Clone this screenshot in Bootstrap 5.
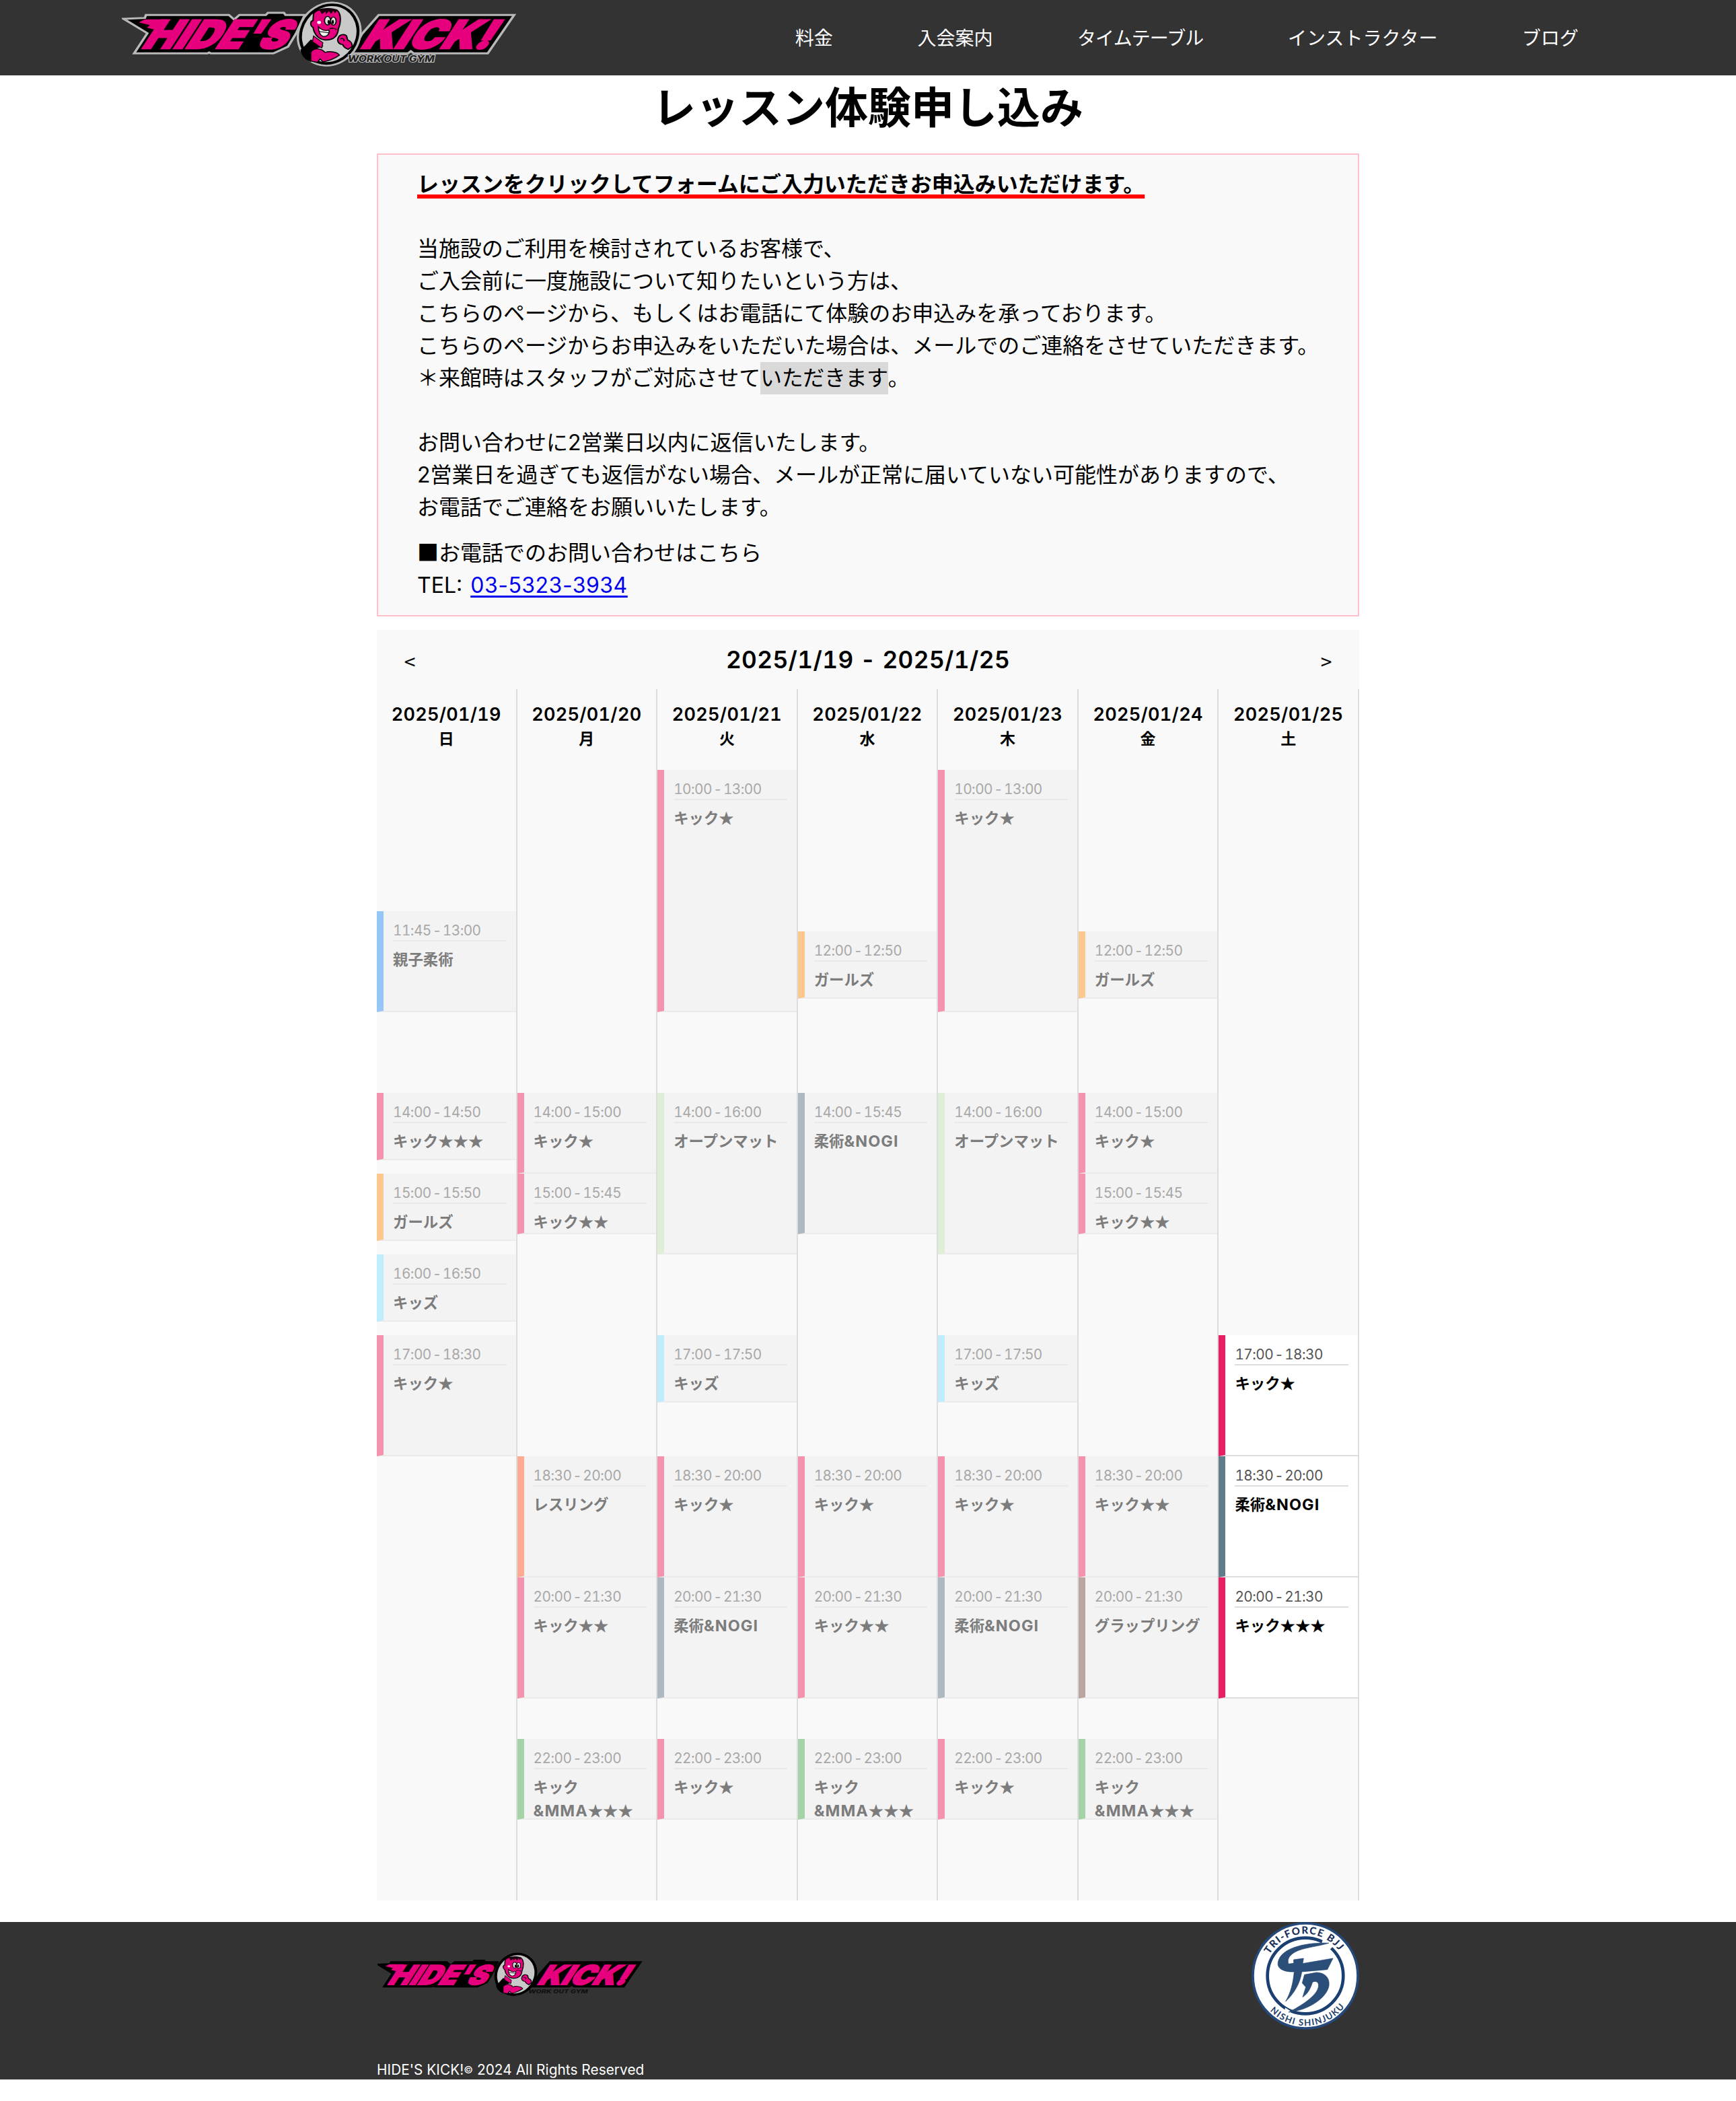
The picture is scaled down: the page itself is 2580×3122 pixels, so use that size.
<!DOCTYPE html>
<html lang="ja">
<head>
<meta charset="utf-8">
<meta name="viewport" content="width=device-width, initial-scale=1">
<title>レッスン体験申し込み | HIDE'S KICK!</title>
<link href="https://cdn.jsdelivr.net/npm/bootstrap@5.3.0/dist/css/bootstrap.min.css" rel="stylesheet">
<style>
  body { font-family: "Inter", "Noto Sans CJK JP", sans-serif; color: #000; background: #fff; font-size: 32px; line-height: 48px; }
  .site-header { height: 112px; background: #333; padding-left: 181px; padding-right: 234px; }
  .site-header svg { display: block; width: 588px; height: 100px; }
  .site-nav { gap: 125.6px; }
  .site-nav .nav-link { font-size: 28px; line-height: 42px; color: #fff; white-space: nowrap; padding-top: 1px !important; }
  .site-nav .tight { letter-spacing: -.9px; }
  .page-title { font-size: 64px; line-height: 96px; height: 116px; font-weight: 700; }
  .page-col { width: 1460px; }
  .info-box { border: 2px solid #ffc0cb; background: #f9f9f9; padding: 20px 0 20px 58px; height: 688px; white-space: nowrap; }
  .info-box p { margin: 0 0 20px; }
  .info-box .lead-line { font-weight: 700; letter-spacing: -.03px; text-decoration: underline; text-decoration-color: #f00; text-decoration-thickness: 6px; text-underline-offset: 4px; text-decoration-skip-ink: none; }
  .info-box .snug { letter-spacing: -.12px; }
  .info-box .tel-row { height: 48px; }
  .square-mark { font-family: "Noto Sans CJK JP", sans-serif; line-height: 1; }
  .picked { background: #d9d9d9; display: inline-block; height: 48px; vertical-align: top; letter-spacing: -.4px; }
  .tel-link { color: #00e; text-decoration-thickness: 3px; text-underline-offset: 4px; letter-spacing: .5px; margin-left: 3px; }
  .calendar { background: #f9f9f9; margin-top: 20px; }
  .cal-head { height: 88px; padding: 0 34px; }
  .cal-head h2 { font-size: 35.2px; font-weight: 600; margin: 0; letter-spacing: .4px; font-variant-numeric: tabular-nums; }
  .cal-head button { background: none; border: 0; padding: 3px 0 0; width: 30px; font-size: 30px; font-family: "Noto Sans CJK JP", sans-serif; color: #000; line-height: 40px; }
  .day { width: 208.571px; border-right: 2px solid #ddd; }
  .day-head { height: 120px; padding-top: 20px; font-weight: 600; font-size: 27px; letter-spacing: .3px; font-variant-numeric: tabular-nums; line-height: 36px; text-align: center; }
  .day-head small { display: block; font-size: 23px; font-weight: 700; letter-spacing: 0; }
  /* one row is five minutes, 10:00 to 24:00 */
  .slots { display: grid; grid-template-columns: 100%; grid-template-rows: repeat(168, 10px); }
  .lesson { --bar: #f592ae; border-left: 10px solid var(--bar); border-bottom: 2px solid #ebebeb; background: #f3f3f3; padding: 12px 14px 0; color: #7c7c7c; min-height: 0; }
  .lesson time { display: block; font-size: 20.8px; line-height: 33px; height: 33px; color: #a8a8a8; border-bottom: 2px solid #e9e9e9; font-variant-numeric: tabular-nums; letter-spacing: -.55px; word-spacing: -3px; white-space: nowrap; }
  .lesson b { display: block; font-family: "Noto Sans CJK JP", sans-serif; font-size: 22.4px; line-height: 34.5px; margin-top: 8px; white-space: nowrap; }
  .lesson b span { font-family: "Inter", sans-serif; font-size: 23.4px; letter-spacing: 1.1px; line-height: 1; }
  .lesson.open { --bar: #e91e63; background: #fff; color: #000; border-bottom-color: #ddd; }
  .lesson.open time { color: #555; border-bottom-color: #ddd; }
  .blue { --bar: #96c6f6; } .orange { --bar: #fdc88e; } .sky { --bar: #bfedfe; } .mat { --bar: #dfeed7; }
  .slate { --bar: #acb9c1; } .salmon { --bar: #ffab92; } .green { --bar: #a5d3a7; } .brown { --bar: #baa69e; }
  .lesson.open.slate { --bar: #607d8b; }
  .site-footer { margin-top: 32px; height: 234px; background: #333; }
  .foot-logo { width: 397px; height: 68.5px; margin: 43px 0 0 1px; }
  .foot-copy { color: #fff; font-size: 20.8px; line-height: 28px; letter-spacing: .05px; }
  .foot-copy span { font-size: 15px; vertical-align: 2px; line-height: 1; }
</style>
</head>
<body>
<header class="site-header d-flex justify-content-between">
  <a href="#" aria-label="HIDE'S KICK!"><svg viewBox="50 0 1440 300" preserveAspectRatio="none">
    <defs>
      <g id="plates" stroke-linejoin="miter">
        <path d="M57 84L134 80L138 67H440L459 87L478 67H574L582 57H640L646 67H716L684 150L655 208L602 238H512L505 238H374L368 234L362 238H95L143 148Z"/>
        <path d="M985 67H1478L1382 238H1112L1102 228L1092 238H885L925 150Z"/>
        <ellipse cx="805" cy="152" rx="112" ry="141" transform="rotate(12 805 152)"/>
      </g>
      <g id="mascot">
        <ellipse cx="805" cy="152" rx="98" ry="126" transform="rotate(12 805 152)" fill="#c9c9c9"/>
        <path d="M700 222C716 206 728 188 738 176C756 184 770 192 784 206C770 212 756 216 744 226L738 276C716 266 702 246 700 222Z" fill="#000"/>
        <path d="M748 160L782 190L778 214L744 186Z" fill="#e6007e" stroke="#000" stroke-width="3"/>
        <path d="M748 60C758 40 800 32 832 44C850 62 848 100 838 130C836 160 820 180 790 178C764 176 750 150 746 122C734 112 736 94 746 92Z" fill="#e6007e" stroke="#000" stroke-width="5"/>
        <path d="M770 46C786 36 812 34 834 46L826 60L820 48L812 62L804 50L792 64L792 52L778 62Z" fill="#200010"/>
        <ellipse cx="799" cy="92" rx="11" ry="19" fill="#ddd" stroke="#000" stroke-width="4"/>
        <ellipse cx="820" cy="94" rx="10" ry="18" fill="#ddd" stroke="#000" stroke-width="4"/>
        <ellipse cx="803" cy="98" rx="4" ry="9"/><ellipse cx="818" cy="98" rx="4" ry="9"/>
        <circle cx="768" cy="100" r="7" fill="#fff"/>
        <path d="M766 120C774 132 790 140 804 134C808 150 796 166 782 162C770 156 766 138 766 120Z" fill="#f4f4f4" stroke="#000" stroke-width="4"/>
        <path d="M768 140L804 146" stroke="#000" stroke-width="3"/>
        <path d="M806 128C814 124 826 126 832 132" stroke="#000" stroke-width="4" fill="none"/>
        <path d="M738 232C750 212 776 214 790 234C806 226 836 232 842 246C824 262 800 272 782 276L772 262L762 278L738 272Z" fill="#e6007e" stroke="#000" stroke-width="4"/>
        <path d="M838 168C842 154 860 150 868 160L872 178C884 184 890 196 888 208L874 220C862 214 856 206 854 198C840 198 832 184 838 168Z" fill="#e6007e" stroke="#000" stroke-width="5"/>
        <path d="M846 174C852 168 862 174 858 184" fill="none" stroke="#000" stroke-width="4"/>
      </g>
      <g id="wordmark" fill="#e6007e" stroke="#e6007e" stroke-width="8" font-family="Inter, 'Liberation Sans', sans-serif" font-weight="900" font-size="174">
        <path d="M112 100L134 86H210L170 132L142 124L152 112Z" stroke="none"/>
        <text transform="translate(118 217) skewX(-28)" textLength="520" lengthAdjust="spacingAndGlyphs">HIDE'S</text>
        <text transform="translate(914 217) skewX(-28)" textLength="472" lengthAdjust="spacingAndGlyphs">KICK!</text>
      </g>
    </defs>
    <use href="#plates" fill="#000" stroke="#b9b9b9" stroke-width="9"/>
    <use href="#wordmark"/>
    <ellipse cx="805" cy="152" rx="112" ry="141" transform="rotate(12 805 152)" fill="#000" stroke="#b9b9b9" stroke-width="7"/>
    <use href="#mascot"/>
    <text x="872" y="275" font-family="Inter, sans-serif" font-weight="800" font-style="italic" font-size="38" textLength="316" lengthAdjust="spacingAndGlyphs" fill="#222" stroke="#c4c4c4" stroke-width="6" paint-order="stroke">WORK OUT GYM</text>
  </svg></a>
  <nav class="nav site-nav align-items-center flex-nowrap">
    <a class="nav-link p-0" href="#">料金</a>
    <a class="nav-link p-0" href="#">入会案内</a>
    <a class="nav-link p-0 tight" href="#">タイムテーブル</a>
    <a class="nav-link p-0" href="#">インストラクター</a>
    <a class="nav-link p-0" href="#">ブログ</a>
  </nav>
</header>

<main>
  <h1 class="page-title text-center m-0">レッスン体験申し込み</h1>
  <div class="page-col mx-auto">
    <section class="info-box">
      <p><span class="lead-line">レッスンをクリックしてフォームにご入力いただきお申込みいただけます。</span><br><br>
      <span class="snug">当施設のご利用を検討されているお客様で、</span><br>
      <span>ご入会前に一度施設について知りたいという方は、</span><br>
      こちらのページから、もしくはお電話にて体験のお申込みを承っております。<br>
      こちらのページからお申込みをいただいた場合は、メールでのご連絡をさせていただきます。<br>
      <span class="snug">＊来館時はスタッフがご対応させて</span><span class="picked">いただきます</span>。<br><br>
      お問い合わせに2営業日以内に返信いたします。<br>
      2営業日を過ぎても返信がない場合、メールが正常に届いていない可能性がありますので、<br>
      お電話でご連絡をお願いいたします。</p>
      <div class="tel-row"><span class="square-mark">■</span>お電話でのお問い合わせはこちら</div>
      <div class="tel-row">TEL: <a class="tel-link" href="tel:0353233934">03-5323-3934</a></div>
    </section>

    <section class="calendar">
      <div class="cal-head d-flex justify-content-between align-items-center">
        <button type="button">&lt;</button>
        <h2>2025/1/19 - 2025/1/25</h2>
        <button type="button">&gt;</button>
      </div>
      <div class="d-flex">
        <div class="day"><div class="day-head">2025/01/19<small>日</small></div>
          <div class="slots">
            <div class="lesson blue" style="grid-row:22/span 15"><time>11:45 - 13:00</time><b>親子柔術</b></div>
            <div class="lesson" style="grid-row:49/span 10"><time>14:00 - 14:50</time><b>キック★★★</b></div>
            <div class="lesson orange" style="grid-row:61/span 10"><time>15:00 - 15:50</time><b>ガールズ</b></div>
            <div class="lesson sky" style="grid-row:73/span 10"><time>16:00 - 16:50</time><b>キッズ</b></div>
            <div class="lesson" style="grid-row:85/span 18"><time>17:00 - 18:30</time><b>キック★</b></div>
          </div></div>
        <div class="day"><div class="day-head">2025/01/20<small>月</small></div>
          <div class="slots">
            <div class="lesson" style="grid-row:49/span 12"><time>14:00 - 15:00</time><b>キック★</b></div>
            <div class="lesson" style="grid-row:61/span 9"><time>15:00 - 15:45</time><b>キック★★</b></div>
            <div class="lesson salmon" style="grid-row:103/span 18"><time>18:30 - 20:00</time><b>レスリング</b></div>
            <div class="lesson" style="grid-row:121/span 18"><time>20:00 - 21:30</time><b>キック★★</b></div>
            <div class="lesson green" style="grid-row:145/span 12"><time>22:00 - 23:00</time><b>キック<br><span>&amp;MMA</span>★★★</b></div>
          </div></div>
        <div class="day"><div class="day-head">2025/01/21<small>火</small></div>
          <div class="slots">
            <div class="lesson" style="grid-row:1/span 36"><time>10:00 - 13:00</time><b>キック★</b></div>
            <div class="lesson mat" style="grid-row:49/span 24"><time>14:00 - 16:00</time><b>オープンマット</b></div>
            <div class="lesson sky" style="grid-row:85/span 10"><time>17:00 - 17:50</time><b>キッズ</b></div>
            <div class="lesson" style="grid-row:103/span 18"><time>18:30 - 20:00</time><b>キック★</b></div>
            <div class="lesson slate" style="grid-row:121/span 18"><time>20:00 - 21:30</time><b>柔術<span>&amp;NOGI</span></b></div>
            <div class="lesson" style="grid-row:145/span 12"><time>22:00 - 23:00</time><b>キック★</b></div>
          </div></div>
        <div class="day"><div class="day-head">2025/01/22<small>水</small></div>
          <div class="slots">
            <div class="lesson orange" style="grid-row:25/span 10"><time>12:00 - 12:50</time><b>ガールズ</b></div>
            <div class="lesson slate" style="grid-row:49/span 21"><time>14:00 - 15:45</time><b>柔術<span>&amp;NOGI</span></b></div>
            <div class="lesson" style="grid-row:103/span 18"><time>18:30 - 20:00</time><b>キック★</b></div>
            <div class="lesson" style="grid-row:121/span 18"><time>20:00 - 21:30</time><b>キック★★</b></div>
            <div class="lesson green" style="grid-row:145/span 12"><time>22:00 - 23:00</time><b>キック<br><span>&amp;MMA</span>★★★</b></div>
          </div></div>
        <div class="day"><div class="day-head">2025/01/23<small>木</small></div>
          <div class="slots">
            <div class="lesson" style="grid-row:1/span 36"><time>10:00 - 13:00</time><b>キック★</b></div>
            <div class="lesson mat" style="grid-row:49/span 24"><time>14:00 - 16:00</time><b>オープンマット</b></div>
            <div class="lesson sky" style="grid-row:85/span 10"><time>17:00 - 17:50</time><b>キッズ</b></div>
            <div class="lesson" style="grid-row:103/span 18"><time>18:30 - 20:00</time><b>キック★</b></div>
            <div class="lesson slate" style="grid-row:121/span 18"><time>20:00 - 21:30</time><b>柔術<span>&amp;NOGI</span></b></div>
            <div class="lesson" style="grid-row:145/span 12"><time>22:00 - 23:00</time><b>キック★</b></div>
          </div></div>
        <div class="day"><div class="day-head">2025/01/24<small>金</small></div>
          <div class="slots">
            <div class="lesson orange" style="grid-row:25/span 10"><time>12:00 - 12:50</time><b>ガールズ</b></div>
            <div class="lesson" style="grid-row:49/span 12"><time>14:00 - 15:00</time><b>キック★</b></div>
            <div class="lesson" style="grid-row:61/span 9"><time>15:00 - 15:45</time><b>キック★★</b></div>
            <div class="lesson" style="grid-row:103/span 18"><time>18:30 - 20:00</time><b>キック★★</b></div>
            <div class="lesson brown" style="grid-row:121/span 18"><time>20:00 - 21:30</time><b>グラップリング</b></div>
            <div class="lesson green" style="grid-row:145/span 12"><time>22:00 - 23:00</time><b>キック<br><span>&amp;MMA</span>★★★</b></div>
          </div></div>
        <div class="day"><div class="day-head">2025/01/25<small>土</small></div>
          <div class="slots">
            <div class="lesson open" style="grid-row:85/span 18"><time>17:00 - 18:30</time><b>キック★</b></div>
            <div class="lesson open slate" style="grid-row:103/span 18"><time>18:30 - 20:00</time><b>柔術<span>&amp;NOGI</span></b></div>
            <div class="lesson open" style="grid-row:121/span 18"><time>20:00 - 21:30</time><b>キック★★★</b></div>
          </div></div>
      </div>
    </section>
  </div>
</main>

<footer class="site-footer">
  <div class="page-col mx-auto h-100 d-flex flex-column justify-content-between">
    <div class="d-flex justify-content-between align-items-start">
      <svg class="foot-logo" viewBox="69.7 0 1420 300" preserveAspectRatio="none">
        <use href="#plates" fill="#000"/>
        <use href="#wordmark"/>
        <ellipse cx="805" cy="152" rx="112" ry="141" transform="rotate(12 805 152)"/>
        <use href="#mascot"/>
        <text x="872" y="275" font-family="Inter, sans-serif" font-weight="800" font-style="italic" font-size="36" textLength="316" lengthAdjust="spacingAndGlyphs" fill="#111">WORK OUT GYM</text>
      </svg>
      <svg width="160" height="160" viewBox="0 0 480 480">
        <defs>
          <path id="arcTop" d="M80 144A186 186 0 0 1 416 178"/>
          <path id="arcLow" d="M82 396A222 222 0 0 0 424 366"/>
        </defs>
        <circle cx="240" cy="240" r="234" fill="#fff" stroke="#24497a" stroke-width="11"/>
        <circle cx="240" cy="240" r="169" fill="none" stroke="#1b3f70" stroke-width="14"/>
        <path d="M322 66L368 104L350 122L312 96ZM150 382L176 398L168 420L146 408Z" fill="#fff"/>
        <path fill="#2b4f78" stroke="#1b3f70" stroke-width="2" d="M345 94C250 90 130 112 118 180C112 215 160 224 190 222C186 270 175 315 152 354C190 320 218 270 224 222L338 212L363 162L228 185L232 162L188 168L188 184L165 187C155 160 180 138 212 126C250 112 300 108 345 94ZM236 235L290 225C328 226 350 250 345 285C335 340 250 395 165 402C220 375 290 330 298 290C302 265 286 262 272 268C262 300 250 320 228 335L242 290L226 272Z"/>
        <g font-family="Lato, sans-serif" font-weight="900" fill="#1a2f5a">
          <text font-size="45"><textPath href="#arcTop" textLength="366">TRI-FORCE BJJ</textPath></text>
          <text font-size="40" font-weight="700" fill="#1f3f6c"><textPath href="#arcLow" textLength="376">NISHI SHINJUKU</textPath></text>
        </g>
      </svg>
    </div>
    <div class="foot-copy">HIDE'S KICK!<span>©</span> 2024 All Rights Reserved</div>
  </div>
</footer>
<script src="https://cdn.jsdelivr.net/npm/bootstrap@5.3.0/dist/js/bootstrap.bundle.min.js"></script>
</body>
</html>
